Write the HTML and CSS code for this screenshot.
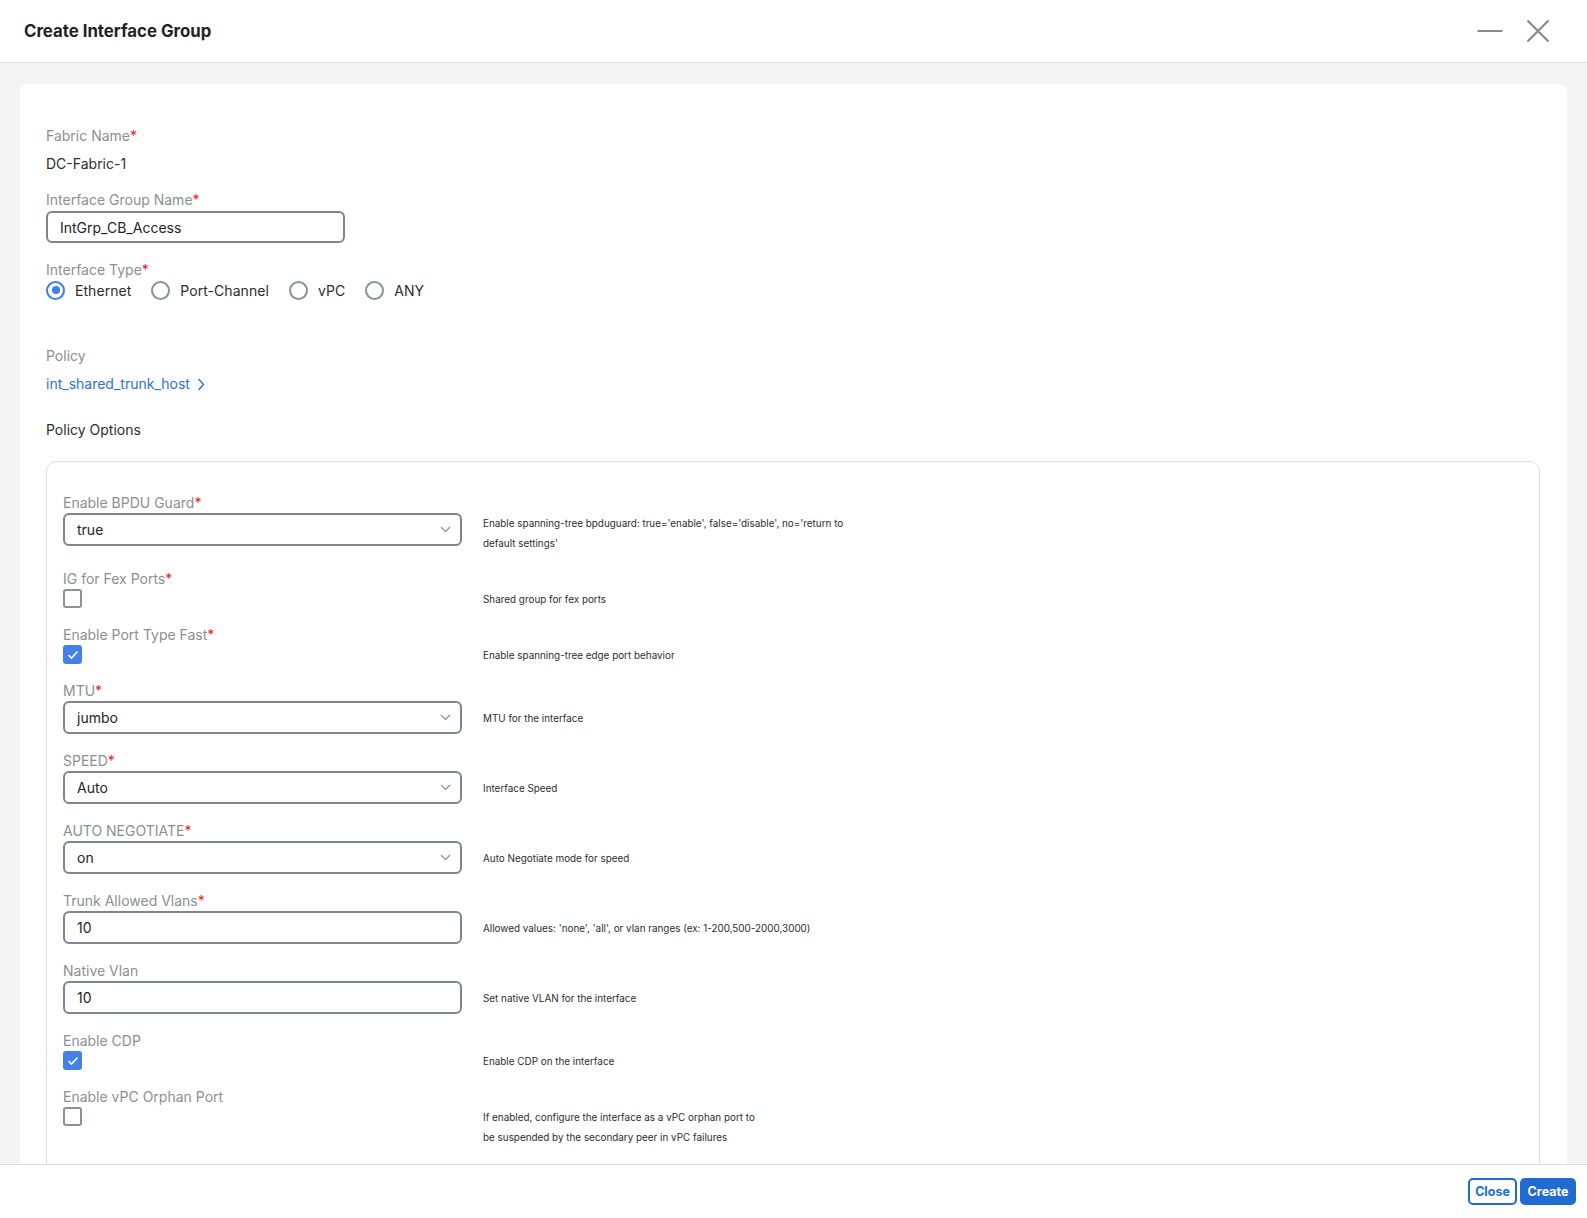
FILE: index.html
```html
<!DOCTYPE html>
<html lang="en">
<head>
<meta charset="utf-8">
<title>Create Interface Group</title>
<link rel="stylesheet" href="styles.css">
</head>
<body>
<div class="app">
  <header class="topbar">
    <h1 class="title">Create Interface Group</h1>
    <div class="win-actions">
      <svg class="ico-min" width="26" height="22" viewBox="0 0 26 22"><line x1="0.5" y1="11" x2="25.5" y2="11" stroke="#8a8a8a" stroke-width="2"/></svg>
      <svg class="ico-close" width="24" height="24" viewBox="0 0 24 24"><path d="M1.5 1.5 L22.5 22.5 M22.5 1.5 L1.5 22.5" stroke="#8a8a8a" stroke-width="2.2" fill="none"/></svg>
    </div>
  </header>

  <main class="content">
    <section class="card">
      <div class="lbl">Fabric Name<span class="req">*</span></div>
      <div class="value">DC-Fabric-1</div>

      <div class="lbl mt16">Interface Group Name<span class="req">*</span></div>
      <div class="text-input name-input">IntGrp_CB_Access</div>

      <div class="lbl mt17">Interface Type<span class="req">*</span></div>
      <div class="radios">
        <div class="radio-item"><span class="radio on"></span><span>Ethernet</span></div>
        <div class="radio-item"><span class="radio"></span><span>Port-Channel</span></div>
        <div class="radio-item"><span class="radio"></span><span>vPC</span></div>
        <div class="radio-item"><span class="radio"></span><span>ANY</span></div>
      </div>

      <div class="lbl mt46">Policy</div>
      <div class="policy-link">int_shared_trunk_host
        <svg class="chev-right" width="8" height="13" viewBox="0 0 8 13"><path d="M1.5 1 L6.5 6.5 L1.5 12" stroke="#2f6fd4" stroke-width="1.4" fill="none"/></svg>
      </div>

      <div class="section-title">Policy Options</div>

      <div class="options-box">
        <div class="opt">
          <div class="lbl">Enable BPDU Guard<span class="req">*</span></div>
          <div class="select"><span>true</span><svg class="chev" width="11" height="7" viewBox="0 0 11 7"><path d="M1 1 L5.5 5.5 L10 1" stroke="#8a8f96" stroke-width="1.2" fill="none"/></svg></div>
          <div class="desc">Enable spanning-tree bpduguard: true='enable', false='disable', no='return to<br>default settings'</div>
        </div>

        <div class="opt">
          <div class="lbl">IG for Fex Ports<span class="req">*</span></div>
          <div class="ctl-check"><span class="check"></span></div>
          <div class="desc">Shared group for fex ports</div>
        </div>

        <div class="opt">
          <div class="lbl">Enable Port Type Fast<span class="req">*</span></div>
          <div class="ctl-check"><span class="check on"><svg width="12" height="10" viewBox="0 0 12 10"><path d="M1.5 5 L4.5 8 L10.5 1.5" stroke="#fff" stroke-width="1.6" fill="none"/></svg></span></div>
          <div class="desc">Enable spanning-tree edge port behavior</div>
        </div>

        <div class="opt tall">
          <div class="lbl">MTU<span class="req">*</span></div>
          <div class="select"><span>jumbo</span><svg class="chev" width="11" height="7" viewBox="0 0 11 7"><path d="M1 1 L5.5 5.5 L10 1" stroke="#8a8f96" stroke-width="1.2" fill="none"/></svg></div>
          <div class="desc">MTU for the interface</div>
        </div>

        <div class="opt tall">
          <div class="lbl">SPEED<span class="req">*</span></div>
          <div class="select"><span>Auto</span><svg class="chev" width="11" height="7" viewBox="0 0 11 7"><path d="M1 1 L5.5 5.5 L10 1" stroke="#8a8f96" stroke-width="1.2" fill="none"/></svg></div>
          <div class="desc">Interface Speed</div>
        </div>

        <div class="opt tall">
          <div class="lbl">AUTO NEGOTIATE<span class="req">*</span></div>
          <div class="select"><span>on</span><svg class="chev" width="11" height="7" viewBox="0 0 11 7"><path d="M1 1 L5.5 5.5 L10 1" stroke="#8a8f96" stroke-width="1.2" fill="none"/></svg></div>
          <div class="desc">Auto Negotiate mode for speed</div>
        </div>

        <div class="opt tall">
          <div class="lbl">Trunk Allowed Vlans<span class="req">*</span></div>
          <div class="text-input wide">10</div>
          <div class="desc">Allowed values: 'none', 'all', or vlan ranges (ex: 1-200,500-2000,3000)</div>
        </div>

        <div class="opt tall">
          <div class="lbl">Native Vlan</div>
          <div class="text-input wide">10</div>
          <div class="desc">Set native VLAN for the interface</div>
        </div>

        <div class="opt">
          <div class="lbl">Enable CDP</div>
          <div class="ctl-check"><span class="check on"><svg width="12" height="10" viewBox="0 0 12 10"><path d="M1.5 5 L4.5 8 L10.5 1.5" stroke="#fff" stroke-width="1.6" fill="none"/></svg></span></div>
          <div class="desc">Enable CDP on the interface</div>
        </div>

        <div class="opt">
          <div class="lbl">Enable vPC Orphan Port</div>
          <div class="ctl-check"><span class="check"></span></div>
          <div class="desc">If enabled, configure the interface as a vPC orphan port to<br>be suspended by the secondary peer in vPC failures</div>
        </div>
      </div>
    </section>
  </main>

  <footer class="footer">
    <button class="btn btn-outline">Close</button>
    <button class="btn btn-primary">Create</button>
  </footer>
</div>
</body>
</html>
```
FILE: styles.css
```css
* { box-sizing: border-box; }
html, body { margin: 0; padding: 0; height: 100%; }
body {
  font-family: Inter, "Noto Sans", "Liberation Sans", sans-serif;
  color: #2b2d30;
  background: #f4f4f4;
  overflow: hidden;
}
.app {
  height: 100vh;
  display: flex;
  flex-direction: column;
}

/* header */
.topbar {
  height: 63px;
  flex: none;
  background: #fff;
  border-bottom: 1px solid #dcdcdc;
  display: flex;
  align-items: center;
  justify-content: space-between;
  padding: 0 37px 0 24px;
}
.title {
  margin: 0;
  font-size: 16.8px;
  font-weight: 700;
  letter-spacing: 0;
  color: #1f2328;
}
.win-actions {
  display: flex;
  align-items: center;
  gap: 23px;
}
.ico-min, .ico-close { display: block; }

/* content */
.content {
  flex: 1;
  overflow: hidden;
  padding: 21px 20px 0 20px;
}
.card {
  background: #fff;
  border-radius: 8px;
  padding: 42px 26px 40px 26px;
}
.lbl {
  font-size: 14px;
  line-height: 20px;
  color: #8b8f94;
}
.req { color: #e3241b; }
.value {
  margin-top: 8px;
  font-size: 14px;
  line-height: 20px;
  color: #2b2d30;
}
.mt16 { margin-top: 16px; }
.mt17 { margin-top: 17px; }
.mt46 { margin-top: 46px; }

.text-input {
  height: 32px;
  border: 2px solid #7e858d;
  border-radius: 6px;
  display: flex;
  align-items: center;
  padding-left: 12px;
  font-size: 14px;
  color: #1f2328;
}
.name-input {
  width: 299px;
  margin-top: 1px;
}

.radios {
  display: flex;
  align-items: center;
  gap: 20px;
  height: 20px;
}
.radio-item {
  display: flex;
  align-items: center;
  gap: 10px;
  font-size: 14px;
  letter-spacing: 0.05px;
  color: #2b2d30;
}
.radio {
  width: 19px;
  height: 19px;
  border-radius: 50%;
  border: 2px solid #8b9198;
  display: inline-block;
  position: relative;
}
.radio.on { border-color: #3f7fe3; }
.radio.on::after {
  content: "";
  position: absolute;
  left: 3.5px;
  top: 3.5px;
  width: 8px;
  height: 8px;
  border-radius: 50%;
  background: #3f7fe3;
}

.policy-link {
  margin-top: 8px;
  font-size: 14px;
  line-height: 20px;
  color: #2f6fd4;
  display: flex;
  align-items: center;
  gap: 7px;
}
.section-title {
  margin-top: 26px;
  font-size: 14px;
  line-height: 20px;
  color: #2b2d30;
}

.options-box {
  margin-top: 21px;
  margin-right: 1px;
  border: 1px solid #dedede;
  border-radius: 10px;
  padding: 31px 16px 40px 16px;
  display: flex;
  flex-direction: column;
  gap: 16px;
}
.opt {
  display: grid;
  grid-template-columns: 399px 1fr;
  column-gap: 21px;
  grid-template-rows: auto auto;
}
.opt.tall { padding-bottom: 1px; }
.opt .lbl { grid-column: 1; grid-row: 1; }
.opt .select, .opt .text-input, .opt .ctl-check {
  grid-column: 1;
  grid-row: 2;
  align-self: start;
}
.opt .desc {
  grid-column: 2;
  grid-row: 2;
  align-self: center;
  font-size: 9.9px;
  line-height: 20px;
  color: #2b2d30;
  white-space: nowrap;
}
.select {
  height: 33px;
  border: 2px solid #7e858d;
  border-radius: 6px;
  display: flex;
  align-items: center;
  justify-content: space-between;
  padding: 0 9px 0 12px;
  font-size: 14px;
  color: #1f2328;
}
.text-input.wide { height: 33px; }
.ctl-check { height: 20px; }
.check {
  width: 19px;
  height: 19px;
  border: 2px solid #8b9198;
  border-radius: 3px;
  display: flex;
  align-items: center;
  justify-content: center;
}
.check.on {
  background: #4480e8;
  border-color: #4480e8;
}

/* footer */
.footer {
  flex: none;
  height: 54px;
  background: #fff;
  border-top: 1px solid #dcdcdc;
  display: flex;
  align-items: center;
  justify-content: flex-end;
  gap: 3px;
  padding-right: 11px;
}
.btn {
  height: 27px;
  border-radius: 5px;
  font-family: Inter, "Liberation Sans", sans-serif;
  font-size: 12.5px;
  font-weight: 700;
  padding: 0;
  cursor: pointer;
}
.btn-outline {
  width: 49px;
  background: #fff;
  color: #1f6bd1;
  border: 2px solid #1f6bd1;
}
.btn-primary {
  width: 56px;
  background: #1f6bd1;
  color: #fff;
  border: 2px solid #1f6bd1;
}
```
